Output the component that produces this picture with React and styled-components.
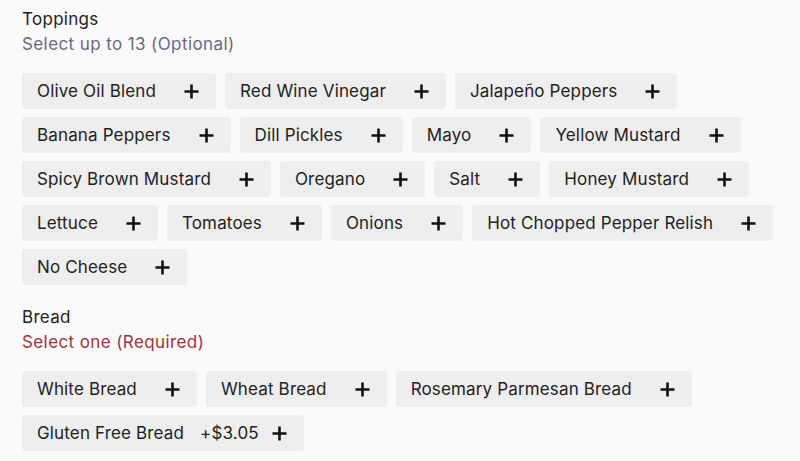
import React from "react";
import styled, { createGlobalStyle } from "styled-components";

const GlobalStyle = createGlobalStyle`
  html, body {
    margin: 0;
    padding: 0;
    background: #fafafa;
  }
  body {
    font-family: Inter, "Noto Sans", sans-serif;
    color: #222;
  }
`;

const Page = styled.div`
  height: 447px;
  overflow: hidden;
  padding: 7px 22px 0;
`;

const Section = styled.section`
  margin-bottom: 20px;
`;

const Title = styled.h3`
  margin: 0;
  font-size: 17px;
  font-weight: 400;
  letter-spacing: 0.3px;
  line-height: 25px;
  color: #222;
`;

const Subtitle = styled.div`
  font-size: 17px;
  letter-spacing: 0.4px;
  line-height: 25px;
  color: ${(p) => (p.$required ? "#a3323c" : "#6c6883")};
`;

const Options = styled.ul`
  list-style: none;
  margin: 16px 0 0;
  padding: 0;
  display: flex;
  flex-wrap: wrap;
  gap: 8px 9px;
`;

const Chip = styled.li`
  display: flex;
  align-items: center;
  height: 36px;
  padding: 0 17px 0 15px;
  background: #eeeeee;
  border-radius: 4px;
  font-size: 17px;
  letter-spacing: 0.15px;
  color: #222;
  box-sizing: border-box;
`;

const Price = styled.span`
  margin-left: 16px;
`;

const Plus = styled.svg`
  margin-left: ${(p) => (p.$tight ? "13px" : "28px")};
  width: 15px;
  height: 15px;
  flex-shrink: 0;
`;

const PlusIcon = ({ tight }) => (
  <Plus $tight={tight} viewBox="0 0 15 15">
    <path d="M7.5 0.5v14M0.5 7.5h14" stroke="#111" strokeWidth="2.6" />
  </Plus>
);

const toppings = [
  "Olive Oil Blend",
  "Red Wine Vinegar",
  "Jalapeño Peppers",
  "Banana Peppers",
  "Dill Pickles",
  "Mayo",
  "Yellow Mustard",
  "Spicy Brown Mustard",
  "Oregano",
  "Salt",
  "Honey Mustard",
  "Lettuce",
  "Tomatoes",
  "Onions",
  "Hot Chopped Pepper Relish",
  "No Cheese",
];

const breads = [
  { name: "White Bread" },
  { name: "Wheat Bread" },
  { name: "Rosemary Parmesan Bread" },
  { name: "Gluten Free Bread", price: "+$3.05" },
];

const Option = ({ name, price }) => (
  <Chip>
    <span>{name}</span>
    {price && <Price>{price}</Price>}
    <PlusIcon tight={!!price} />
  </Chip>
);

export default function App() {
  return (
    <>
      <GlobalStyle />
      <Page>
        <Section>
          <Title>Toppings</Title>
          <Subtitle>Select up to 13 (Optional)</Subtitle>
          <Options>
            {toppings.map((t) => (
              <Option key={t} name={t} />
            ))}
          </Options>
        </Section>
        <Section>
          <Title>Bread</Title>
          <Subtitle $required>Select one (Required)</Subtitle>
          <Options>
            {breads.map((b) => (
              <Option key={b.name} name={b.name} price={b.price} />
            ))}
          </Options>
        </Section>
      </Page>
    </>
  );
}
